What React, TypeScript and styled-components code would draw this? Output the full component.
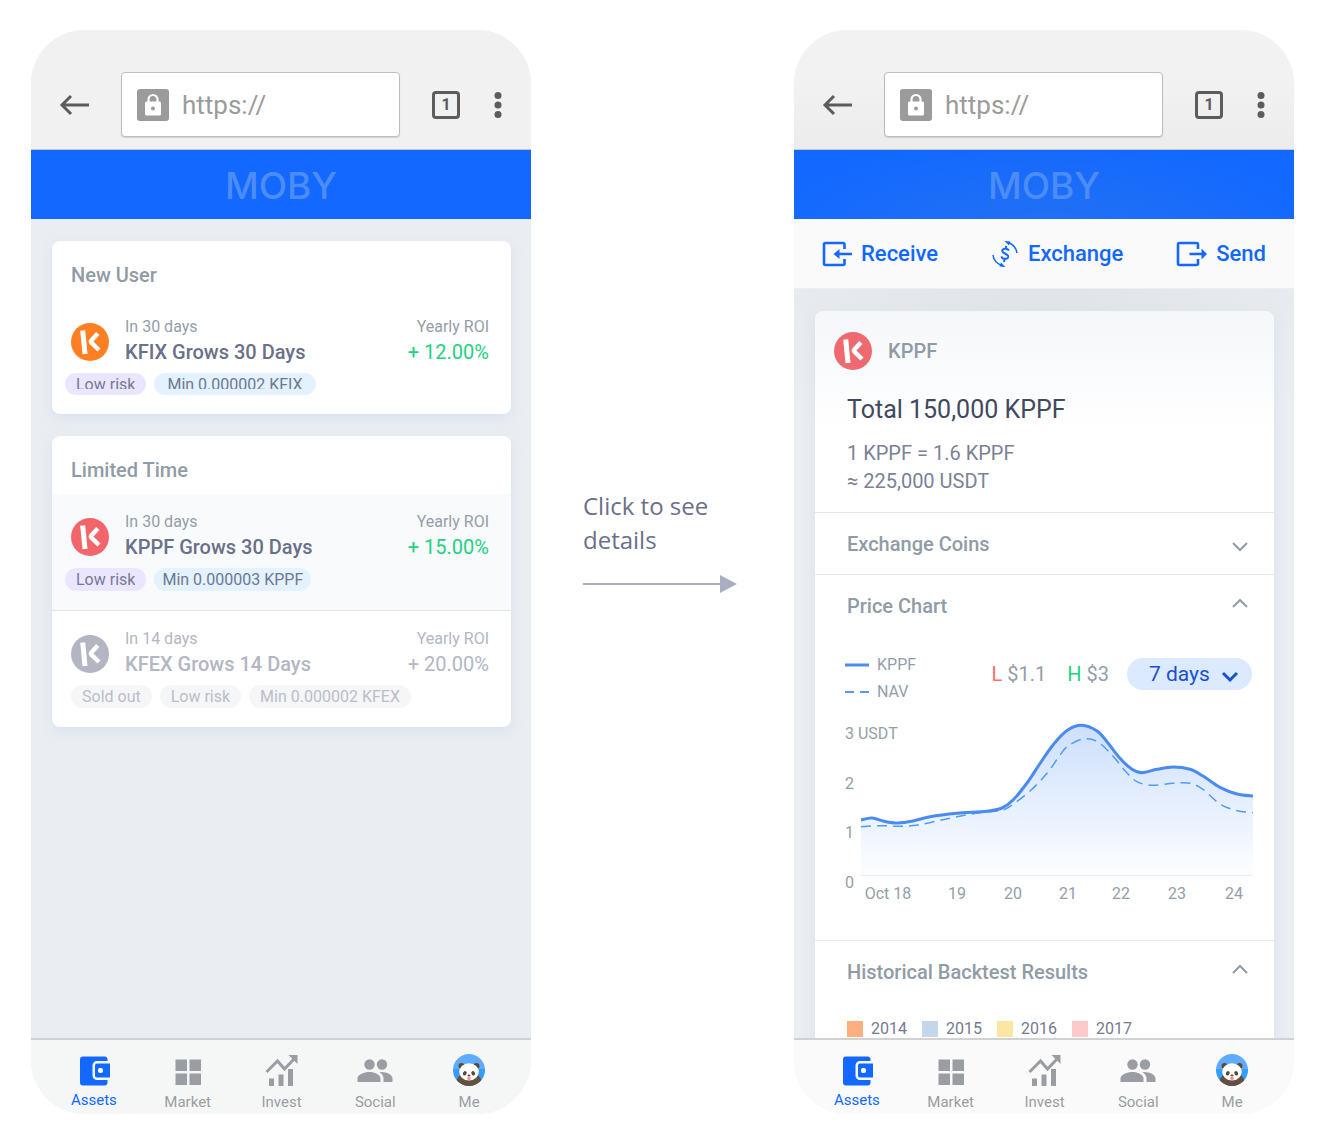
import React, { useId } from "react";
import styled, { createGlobalStyle, css } from "styled-components";

const GlobalStyle = createGlobalStyle`
  *, *::before, *::after { box-sizing: border-box; }
  body { margin: 0; background: #fff; font-family: Roboto, "Liberation Sans", sans-serif; }
  button, input, select { font: inherit; color: inherit; }
  h1, h2, h3, p, ul, dl, dd { margin: 0; padding: 0; }
`;

const Page = styled.main`
  display: grid;
  grid-template-columns: minmax(0, 1fr) 263px minmax(0, 1fr);
  min-height: 100vh;
  padding: 30px 32px 32px 31px;
`;

const Phone = styled.section`
  display: flex;
  flex-direction: column;
  height: calc(100vh - 62px);
  min-height: 640px;
  border-radius: 54px;
  overflow: hidden;
  background: #eaeef2;
`;

const Chrome = styled.header<{ $dim?: boolean }>`
  display: flex;
  align-items: center;
  flex: none;
  height: 120px;
  padding: 30px 24px 0 28px;
  border-bottom: 1px solid #c6c6c6;
  color: #5c5c5c;
  background: ${(p) => (p.$dim ? "linear-gradient(#f2f2f2 40%, #ececed)" : "#f1f1f1")};
`;

const IconButton = styled.button`
  display: flex;
  align-items: center;
  justify-content: center;
  padding: 0;
  border: 0;
  background: none;
`;

const Address = styled.label`
  display: flex;
  align-items: center;
  flex: 1;
  min-width: 0;
  height: 65px;
  margin: 0 32px 0 30px;
  padding: 0 15px;
  gap: 13px;
  border: 1px solid #bdbdbd;
  border-radius: 4px;
  background: #fff;
  box-shadow: 0 1px 1px #00000022;
`;

const AddressInput = styled.input`
  flex: 1;
  min-width: 0;
  padding: 0;
  border: 0;
  outline: 0;
  background: none;
  color: #9b9b9b;
  font-size: 26px;
  line-height: 32px;
`;

const TabCount = styled.button`
  width: 28px;
  height: 28px;
  padding: 0;
  border: 3px solid #5c5c5c;
  border-radius: 4px;
  background: none;
  font-size: 16px;
  line-height: 22px;
  font-weight: 700;
`;

const MenuButton = styled(IconButton)`
  width: 18px;
  margin-left: 29px;
`;

const Brand = styled.h1<{ $dim?: boolean }>`
  flex: none;
  height: 69px;
  background: ${(p) =>
    p.$dim ? "radial-gradient(ellipse at 50% 130%, #206ff5 20%, #1268ff 85%)" : "#1268ff"};
  color: #4c8cf6;
  font: 500 37px/71px Inter, "Liberation Sans", sans-serif;
  text-align: center;
`;

const Body = styled.div<{ $dim?: boolean }>`
  display: flex;
  flex-direction: column;
  flex: 1;
  gap: 22px;
  min-height: 0;
  padding: 22px 20px 0 21px;
  overflow: hidden auto;
  scrollbar-width: none;
  background: ${(p) =>
    p.$dim
      ? "radial-gradient(ellipse 340px 160px at 50% 0, #e0e4e9, #eaeef200) #eaeef2"
      : "#eaeef2"};
`;

const Card = styled.section<{ $dim?: boolean }>`
  flex: none;
  border-radius: 8px;
  background: ${(p) => (p.$dim ? "linear-gradient(#f5f7fa, #fff 120px)" : "#fff")};
  box-shadow: 0 4px 12px #c9d6ea80;
  overflow: hidden;
`;

const CardTitle = styled.h2`
  padding: 20px 19px 10px;
  color: #919ba6;
  font-size: 20px;
  line-height: 28px;
  font-weight: 500;
`;

const Product = styled.article<{ $selected?: boolean; $muted?: boolean }>`
  padding: 18px 13px 19px;
  background: ${(p) => (p.$selected ? "#f8fafc" : "transparent")};
  color: ${(p) => (p.$muted ? "#b3b6c4" : "#949ea9")};
  & + & { border-top: 1px solid #dfe2e6; }
`;

const ProductSummary = styled.div`
  display: flex;
  align-items: center;
  padding: 0 9px 0 6px;
  margin-bottom: 6px;
`;

const ProductText = styled.div<{ $end?: boolean }>`
  flex: ${(p) => (p.$end ? "none" : "1")};
  margin-left: ${(p) => (p.$end ? "0" : "16px")};
  text-align: ${(p) => (p.$end ? "right" : "left")};
`;

const Small = styled.p`
  font-size: 16px;
  line-height: 20px;
`;

const ProductName = styled.h3<{ $muted?: boolean }>`
  color: ${(p) => (p.$muted ? "#b3b6c4" : "#697087")};
  font-size: 20px;
  line-height: 30px;
  font-weight: 500;
`;

const Roi = styled.p<{ $muted?: boolean }>`
  color: ${(p) => (p.$muted ? "#b3b6c4" : "#1fd182")};
  font-size: 20px;
  line-height: 30px;
`;

const Tags = styled.ul<{ $inset?: boolean }>`
  display: flex;
  gap: 8px;
  padding-left: ${(p) => (p.$inset ? "6px" : "0")};
  list-style: none;
`;

const tones = {
  violet: css`background: #ebe6ff; color: #757a90;`,
  blue: css`background: #e4f1ff; color: #6d7890;`,
  grey: css`background: #f5f6f8; color: #babdc9;`,
};

const tagPadding = { tight: "8px", normal: "11px", wide: "13px" };

const Tag = styled.li<{
  $tone: keyof typeof tones;
  $space: keyof typeof tagPadding;
  $clipped?: boolean;
}>`
  height: ${(p) => (p.$clipped ? "22px" : "23px")};
  padding: 0 ${(p) => tagPadding[p.$space]};
  border-radius: 12px;
  font-size: 16px;
  line-height: 23px;
  ${(p) => tones[p.$tone]}
`;

const TagText = styled.span<{ $clipped?: boolean }>`
  display: block;
  height: ${(p) => (p.$clipped ? "16px" : "100%")};
  overflow: hidden;
  white-space: nowrap;
`;

const Nav = styled.nav<{ $dim?: boolean }>`
  display: grid;
  grid-template-columns: repeat(5, 1fr);
  flex: none;
  height: 76px;
  padding: 0 15px 0 16px;
  border-top: 2px solid #cfd1d3;
  background: ${(p) => (p.$dim ? "#fafafa" : "#f5f7f7")};
`;

const NavItem = styled.a<{ $active?: boolean }>`
  display: flex;
  flex-direction: column;
  align-items: center;
  padding-top: 14px;
  gap: ${(p) => (p.$active ? "4px" : "6px")};
  color: ${(p) => (p.$active ? "#1268ff" : "#9a9da2")};
  font-size: 15px;
  line-height: 20px;
  text-decoration: none;
  svg { display: block; }
`;

const Caption = styled.aside`
  align-self: center;
  width: 206px;
  padding: 0 0 61px 52px;
  color: #6a7089;
  font: 24px/34px "Open Sans", "Noto Sans", sans-serif;
  svg { display: block; margin-top: 17px; }
`;

const Actions = styled.div`
  display: flex;
  align-items: center;
  justify-content: space-between;
  flex: none;
  height: 70px;
  padding: 0 28px;
  border-bottom: 1px solid #eceef0;
  background: #fafafa;
`;

const Action = styled.button`
  display: flex;
  align-items: center;
  gap: 9px;
  padding: 0;
  border: 0;
  background: none;
  color: #1268ff;
  font-size: 22px;
  line-height: 28px;
  font-weight: 500;
`;

const CoinHeader = styled.div`
  display: flex;
  align-items: center;
  gap: 16px;
  padding: 21px 19px 22px;
  color: #919ba6;
  font-size: 20px;
  font-weight: 500;
  h2 { font: inherit; }
`;

const Balance = styled.div`
  padding: 0 32px 17px;
  color: #7b8197;
  font-size: 20px;
  line-height: 28px;
`;

const Total = styled.p`
  margin-bottom: 11px;
  color: #414860;
  font-size: 25px;
  line-height: 36px;
`;

const Section = styled.section`
  border-top: 1px solid #e4e8eb;
`;

const SectionToggle = styled.button`
  display: flex;
  align-items: center;
  justify-content: space-between;
  width: 100%;
  height: 61px;
  padding: 0 25px 0 32px;
  border: 0;
  background: none;
  color: #919ba6;
  font-size: 20px;
  line-height: 28px;
  font-weight: 500;
`;

const ChartPanel = styled.div`
  padding: 15px 20px 34px 30px;
`;

const ChartHeader = styled.div`
  display: flex;
  align-items: flex-start;
  justify-content: space-between;
  margin-bottom: 15px;
  padding-right: 2px;
  color: #949ea9;
`;

const Series = styled.ul`
  list-style: none;
  font-size: 16px;
  line-height: 27px;
  li { display: flex; align-items: center; gap: 8px; }
`;

const ChartControls = styled.div`
  display: flex;
  align-items: center;
  gap: 18px;
  padding-top: 7px;
`;

const Extremes = styled.div`
  display: flex;
  gap: 21px;
`;

const Extreme = styled.p<{ $color: string }>`
  font-size: 20px;
  line-height: 28px;
  span { color: ${(p) => p.$color}; }
`;

const PeriodField = styled.label`
  display: grid;
  align-items: center;
  width: 125px;
  height: 32px;
  border-radius: 16px;
  background: #dceaff;
  color: #1b4fd0;
  > * { grid-area: 1 / 1; }
  svg { justify-self: end; margin-right: 13px; pointer-events: none; }
`;

const Period = styled.select`
  appearance: none;
  width: 100%;
  height: 32px;
  padding: 0 36px 0 22px;
  border: 0;
  background: none;
  font-size: 21px;
  line-height: 32px;
`;

const Chart = styled.svg`
  display: block;
  width: 100%;
  fill: #949ea9;
  font-size: 16px;
`;

const Years = styled.ul`
  display: flex;
  gap: 15px;
  padding: 15px 32px 12px;
  list-style: none;
  color: #747a90;
  font-size: 16px;
  line-height: 24px;
  li { display: flex; align-items: center; gap: 8px; }
`;

const Swatch = styled.span<{ $color: string }>`
  width: 16px;
  height: 16px;
  background: ${(p) => p.$color};
`;

function CoinIcon({ color }: { color: string }) {
  return (
    <svg width="38" height="38" viewBox="0 0 38 38" aria-hidden="true">
      <circle cx="19" cy="19" r="19" fill={color} />
      <g stroke="#fff" fill="none">
        <path d="M11.700 7.500 14 31" strokeWidth="5" />
        <path d="M26.800 10.500 20.600 17.300q-1.300 1.500 .3 2.900L28 27" strokeWidth="4.500" />
      </g>
    </svg>
  );
}

function BrowserBar({ dim }: { dim?: boolean }) {
  return (
    <Chrome $dim={dim}>
      <IconButton aria-label="Back">
        <svg width="32" height="22" viewBox="0 0 32 22" fill="none" stroke="currentColor" strokeWidth="3">
          <path d="M30 11H3.500M12 2 3 11l9 9" />
        </svg>
      </IconButton>
      <Address>
        <svg width="32" height="32" viewBox="0 0 32 32" aria-hidden="true">
          <rect width="32" height="32" rx="3" fill="#9b9b9b" />
          <path d="M11.500 14v-3.500a4.500 4.500 0 0 1 9 0V14" fill="none" stroke="#fff" strokeWidth="2.200" />
          <rect x="8" y="12.500" width="16" height="14" rx="1.500" fill="#fff" />
          <circle cx="16" cy="19.500" r="2" fill="#9b9b9b" />
        </svg>
        <AddressInput aria-label="Address" defaultValue="https://" />
      </Address>
      <TabCount aria-label="Open tabs: 1">1</TabCount>
      <MenuButton aria-label="Menu">
        <svg width="8" height="26" viewBox="0 0 8 26" fill="currentColor">
          <circle cx="4" cy="3.500" r="3.500" />
          <circle cx="4" cy="13" r="3.500" />
          <circle cx="4" cy="22.500" r="3.500" />
        </svg>
      </MenuButton>
    </Chrome>
  );
}

function WalletIcon() {
  return (
    <svg width="32" height="32" viewBox="0 0 32 32">
      <path fill="currentColor" d="M5 2.500h21.500a3 3 0 0 1 3 3V7H19a4.500 4.500 0 0 0-4.500 4.500v10A4.500 4.500 0 0 0 19 26h10.500v2.500a3 3 0 0 1-3 3H5a3 3 0 0 1-3-3v-23a3 3 0 0 1 3-3Z" />
      <path fill="currentColor" d="M19 9.500h13v14H19a2 2 0 0 1-2-2v-10a2 2 0 0 1 2-2Z" />
      <rect x="20" y="14" width="5" height="5" rx="2" fill="#fff" />
    </svg>
  );
}

function MarketIcon() {
  return (
    <svg width="32" height="32" viewBox="0 0 32 32" fill="currentColor">
      <path d="M3.500 5.500h11.500v11.500H3.500zM17.500 5.500h11.500v11.500H17.500zM3.500 19.500h11.500V31H3.500zM17.500 19.500h11.500V31H17.500z" />
    </svg>
  );
}

function InvestIcon() {
  return (
    <svg width="34" height="32" viewBox="0 0 34 32" fill="currentColor">
      <path d="M5 24.500h5V32H5zM14.500 20.500h5V32h-5zM24 15h5v17h-5z" />
      <path d="m2.500 18 11-11 7 8L30.500 4.500" fill="none" stroke="currentColor" strokeWidth="3" />
      <path d="M24.500 1H33.500v9z" />
    </svg>
  );
}

function SocialIcon() {
  return (
    <svg width="36" height="32" viewBox="0 0 36 32" fill="currentColor">
      <circle cx="12.500" cy="10.500" r="5.200" />
      <circle cx="25" cy="10.500" r="5.200" />
      <path d="M.500 28v-3.500c0-4 7-6.500 12-6.500s11 2.500 11 6.500V28zM22.500 18.200c6-.7 13 2.300 13 6.300V28h-9v-3.500c0-2.800-1.500-4.800-4-6.300z" />
    </svg>
  );
}

function PandaIcon() {
  const clip = useId();
  return (
    <svg width="32" height="32" viewBox="0 0 32 32">
      <clipPath id={clip}><circle cx="16" cy="16" r="16" /></clipPath>
      <g clipPath={`url(#${clip})`}>
        <path fill="#5facff" d="M0 0h32v16H0z" />
        <path fill="#359dff" d="M0 15h32v17H0z" />
        <ellipse cx="16" cy="28" rx="12.500" ry="9.500" fill="#65503f" />
        <circle cx="8.500" cy="12" r="3" fill="#5c4637" />
        <circle cx="23.500" cy="12" r="3" fill="#5c4637" />
        <ellipse cx="16" cy="17.800" rx="9.800" ry="8.600" fill="#fff" />
        <ellipse cx="11.800" cy="19.300" rx="1.800" ry="2.300" fill="#5c4637" transform="rotate(25 11.800 19.300)" />
        <ellipse cx="20.200" cy="19.300" rx="1.800" ry="2.300" fill="#5c4637" transform="rotate(-25 20.200 19.300)" />
        <ellipse cx="16" cy="21.500" rx="1.600" ry="1" fill="#6b4a40" />
        <circle cx="16" cy="24.500" r="1.800" fill="#e8949a" />
      </g>
    </svg>
  );
}

function BottomNav({ dim }: { dim?: boolean }) {
  return (
    <Nav $dim={dim} aria-label="Main">
      <NavItem href="#assets" $active><WalletIcon />Assets</NavItem>
      <NavItem href="#market"><MarketIcon />Market</NavItem>
      <NavItem href="#invest"><InvestIcon />Invest</NavItem>
      <NavItem href="#social"><SocialIcon />Social</NavItem>
      <NavItem href="#me"><PandaIcon />Me</NavItem>
    </Nav>
  );
}

type TagData = { text: string; tone: keyof typeof tones; space?: keyof typeof tagPadding };
type ProductProps = {
  color: string;
  term: string;
  name: string;
  roi: string;
  tags: TagData[];
  selected?: boolean;
  muted?: boolean;
  clipped?: boolean;
};

function ProductRow({ color, term, name, roi, tags, selected, muted, clipped }: ProductProps) {
  return (
    <Product $selected={selected} $muted={muted}>
      <ProductSummary>
        <CoinIcon color={color} />
        <ProductText>
          <Small>{term}</Small>
          <ProductName $muted={muted}>{name}</ProductName>
        </ProductText>
        <ProductText $end>
          <Small>Yearly ROI</Small>
          <Roi $muted={muted}>{roi}</Roi>
        </ProductText>
      </ProductSummary>
      <Tags $inset={muted}>
        {tags.map((t) => (
          <Tag key={t.text} $tone={t.tone} $space={t.space ?? "normal"} $clipped={clipped}>
            <TagText $clipped={clipped}>{t.text}</TagText>
          </Tag>
        ))}
      </Tags>
    </Product>
  );
}

function Chevron({ up, bold }: { up?: boolean; bold?: boolean }) {
  return (
    <svg width="18" height="18" viewBox="0 0 18 18" fill="none" stroke="currentColor" strokeWidth={bold ? 3 : 2} aria-hidden="true">
      <path d={up ? "m2 10 7-7 7 7" : "m2 8 7 7 7-7"} />
    </svg>
  );
}

type Point = [number, number];

const price: Point[] = [
  [16, 100], [27, 98], [40, 101.5], [53, 103], [68, 101], [85, 96.7], [112, 93.3], [142, 91.3],
  [157, 88], [168, 80], [182, 63], [195, 43.5], [208, 25], [222, 10.5], [237, 5.3], [252, 11],
  [262, 21.7], [275, 38.3], [287, 49.3], [297, 52.7], [312, 49.3], [328, 47], [345, 49.3],
  [358, 56], [375, 67.3], [392, 74], [408, 76],
];

const nav: Point[] = [
  [16, 106.7], [35, 105.7], [55, 106.3], [73, 105], [92, 101], [112, 96.7], [135, 92.7],
  [157, 90.3], [168, 84.3], [185, 71], [202, 53.3], [215, 35], [223, 26], [238, 19], [252, 21.3],
  [267, 35], [280, 50.7], [292, 61.7], [308, 65.3], [328, 63.3], [345, 63.3], [358, 69.3],
  [375, 84], [392, 90.7], [408, 92.7],
];

/* Smooth line through every point (Catmull-Rom as cubic Béziers). */
function smooth(pts: Point[]) {
  let d = `M${pts[0][0]} ${pts[0][1]}`;
  for (let i = 0; i < pts.length - 1; i++) {
    const a = pts[i - 1] ?? pts[i];
    const b = pts[i];
    const c = pts[i + 1];
    const e = pts[i + 2] ?? c;
    d += `C${b[0] + (c[0] - a[0]) / 6} ${b[1] + (c[1] - a[1]) / 6} ${c[0] - (e[0] - b[0]) / 6} ${c[1] - (e[1] - b[1]) / 6} ${c[0]} ${c[1]}`;
  }
  return d;
}

const yLabels: [string, number][] = [["3 USDT", 19], ["2", 69], ["1", 118], ["0", 168]];
const xLabels: [string, number][] = [["Oct 18", 43], ["19", 112], ["20", 168], ["21", 223], ["22", 276], ["23", 332], ["24", 389]];

function PriceChart() {
  const fill = useId();
  const line = smooth(price);
  return (
    <Chart viewBox="0 0 409 186" role="img" aria-label="Price of KPPF and NAV, Oct 18 to 24">
      <defs>
        <linearGradient id={fill} x1="0" y1="0" x2="0" y2="1">
          <stop offset="0" stopColor="#cddffc" />
          <stop offset="1" stopColor="#fdfeff" />
        </linearGradient>
      </defs>
      <path d={`${line}V155.500H16Z`} fill={`url(#${fill})`} />
      <path d="M16 155.500H408" stroke="#e6eeee" />
      <path d={smooth(nav)} fill="none" stroke="#4f9cf5" strokeWidth="1.500" strokeDasharray="10 6" />
      <path d={line} fill="none" stroke="#4a8bf0" strokeWidth="3" />
      {yLabels.map(([t, y]) => <text key={t} x="0" y={y}>{t}</text>)}
      {xLabels.map(([t, x]) => <text key={t} x={x} y="179" textAnchor="middle">{t}</text>)}
    </Chart>
  );
}

function ReceiveIcon() {
  return (
    <svg width="30" height="26" viewBox="0 0 30 26" fill="none" stroke="currentColor" strokeWidth="2.600" aria-hidden="true">
      <path d="M22.500 8V3.500a1.500 1.500 0 0 0-1.500-1.500H3.500A1.500 1.500 0 0 0 2 3.500v19A1.500 1.500 0 0 0 3.500 24H21a1.500 1.500 0 0 0 1.500-1.500V18M15 13h15" />
      <path d="m17.500 8-6 5 6 5z" fill="currentColor" stroke="none" />
    </svg>
  );
}

function ExchangeIcon() {
  return (
    <svg width="28" height="28" viewBox="0 0 28 28" fill="none" stroke="currentColor" strokeWidth="2" aria-hidden="true">
      <path d="M17.500 2.500c4.500 2 8 6 8.500 10.500M10.500 25.500C6 23.500 2.500 19.500 2 15" strokeWidth="1.500" />
      <path d="M13.500 1 19.500 1.500 18 5.500zM14.500 27 8.500 26.500l1.500-4z" fill="currentColor" stroke="none" />
      <path d="M17.800 10.800c-.7-2.600-6-2.800-6.500-.3-.6 3.800 6.500 2.600 5.900 6.400-.6 2.900-6.200 2.500-6.700-.6M15.200 6l-.5 2.500M13.500 19.300 13 22" />
    </svg>
  );
}

function SendIcon() {
  return (
    <svg width="31" height="26" viewBox="0 0 31 26" fill="none" stroke="currentColor" strokeWidth="2.600" aria-hidden="true">
      <path d="M22 8V3.500a1.500 1.500 0 0 0-1.500-1.500h-17A1.500 1.500 0 0 0 2 3.500v19A1.500 1.500 0 0 0 3.500 24h17a1.500 1.500 0 0 0 1.500-1.500V18M13.500 13H27" />
      <path d="m25.500 7.500 5.500 5.500-5.500 5.500z" fill="currentColor" stroke="none" />
    </svg>
  );
}

const years = [
  { year: "2014", color: "#ffae80" },
  { year: "2015", color: "#c3d6ec" },
  { year: "2016", color: "#fde6a4" },
  { year: "2017", color: "#fdcacc" },
];

export default function App() {
  return (
    <>
      <GlobalStyle />
      <Page>
        <Phone aria-label="Product list">
          <BrowserBar />
          <Brand>MOBY</Brand>
          <Body>
            <Card>
              <CardTitle>New User</CardTitle>
              <ProductRow
                clipped
                color="#ff7f22"
                term="In 30 days"
                name="KFIX Grows 30 Days"
                roi="+ 12.00%"
                tags={[
                  { text: "Low risk", tone: "violet" },
                  { text: "Min 0.000002 KFIX", tone: "blue", space: "wide" },
                ]}
              />
            </Card>
            <Card>
              <CardTitle>Limited Time</CardTitle>
              <ProductRow
                selected
                color="#f2666b"
                term="In 30 days"
                name="KPPF Grows 30 Days"
                roi="+ 15.00%"
                tags={[
                  { text: "Low risk", tone: "violet" },
                  { text: "Min 0.000003 KPPF", tone: "blue", space: "tight" },
                ]}
              />
              <ProductRow
                muted
                color="#b3b5c3"
                term="In 14 days"
                name="KFEX Grows 14 Days"
                roi="+ 20.00%"
                tags={[
                  { text: "Sold out", tone: "grey" },
                  { text: "Low risk", tone: "grey" },
                  { text: "Min 0.000002 KFEX", tone: "grey" },
                ]}
              />
            </Card>
          </Body>
          <BottomNav />
        </Phone>

        <Caption>
          Click to see details
          <svg width="154" height="20" viewBox="0 0 154 20" aria-hidden="true">
            <path d="M0 10h140" stroke="#abaebe" strokeWidth="2" />
            <path d="m137 1 17 9-17 9z" fill="#abaebe" />
          </svg>
        </Caption>

        <Phone aria-label="Product details">
          <BrowserBar dim />
          <Brand $dim>MOBY</Brand>
          <Actions>
            <Action><ReceiveIcon />Receive</Action>
            <Action><ExchangeIcon />Exchange</Action>
            <Action><SendIcon />Send</Action>
          </Actions>
          <Body $dim>
            <Card $dim>
              <CoinHeader>
                <CoinIcon color="#ee6a70" />
                <h2>KPPF</h2>
              </CoinHeader>
              <Balance>
                <Total>Total 150,000 KPPF</Total>
                <p>1 KPPF = 1.6 KPPF</p>
                <p>≈ 225,000 USDT</p>
              </Balance>
              <Section>
                <SectionToggle aria-expanded="false">Exchange Coins<Chevron /></SectionToggle>
              </Section>
              <Section>
                <SectionToggle aria-expanded="true">Price Chart<Chevron up /></SectionToggle>
                <ChartPanel>
                  <ChartHeader>
                    <Series>
                      <li>
                        <svg width="24" height="4" aria-hidden="true"><path d="M0 2h24" stroke="#4a8bf0" strokeWidth="3" /></svg>
                        KPPF
                      </li>
                      <li>
                        <svg width="24" height="4" aria-hidden="true"><path d="M0 2h24" stroke="#4f9cf5" strokeWidth="2" strokeDasharray="9 6" /></svg>
                        NAV
                      </li>
                    </Series>
                    <ChartControls>
                      <Extremes>
                        <Extreme $color="#ff6b70"><span>L</span> $1.1</Extreme>
                        <Extreme $color="#1fd182"><span>H</span> $3</Extreme>
                      </Extremes>
                      <PeriodField>
                        <Period aria-label="Period" defaultValue="7">
                          <option value="7">7 days</option>
                          <option value="30">30 days</option>
                        </Period>
                        <Chevron bold />
                      </PeriodField>
                    </ChartControls>
                  </ChartHeader>
                  <PriceChart />
                </ChartPanel>
              </Section>
              <Section>
                <SectionToggle aria-expanded="true">Historical Backtest Results<Chevron up /></SectionToggle>
                <Years>
                  {years.map(({ year, color }) => (
                    <li key={year}><Swatch $color={color} />{year}</li>
                  ))}
                </Years>
              </Section>
            </Card>
          </Body>
          <BottomNav dim />
        </Phone>
      </Page>
    </>
  );
}
